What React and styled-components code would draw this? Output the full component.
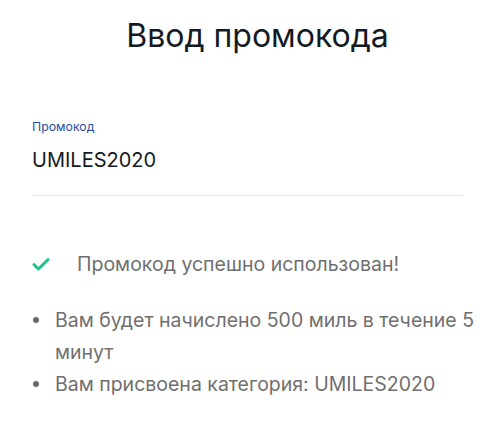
import styled, { createGlobalStyle } from 'styled-components'

const GlobalStyle = createGlobalStyle`
  html, body {
    margin: 0;
    padding: 0;
    background: #ffffff;
  }
  body {
    font-family: Inter, "Noto Sans", sans-serif;
  }
`;

const Modal = styled.div`
  width: 494px;
  height: 427px;
  box-sizing: border-box;
  padding: 16px 31px 0 32px;
  background: #fff;
  overflow: hidden;
`;

const Title = styled.h1`
  margin: 0;
  padding-left: 20px;
  text-align: center;
  font-size: 32px;
  font-weight: 400;
  line-height: 40px;
  color: #141a23;
`;

const Field = styled.div`
  margin-top: 63px;
  padding-bottom: 23px;
  border-bottom: 1px solid #dfe3ea;
`;

const Label = styled.div`
  font-size: 12.3px;
  line-height: 16px;
  color: #2a4ea3;
`;

const Value = styled.div`
  margin-top: 13px;
  font-size: 20px;
  line-height: 24px;
  color: #141a23;
`;

const Success = styled.div`
  display: flex;
  align-items: center;
  gap: 27px;
  margin-top: 56px;
  font-size: 19.5px;
  line-height: 24px;
  color: #6f6f6f;
`;

const List = styled.ul`
  margin: 28px -20px 0 0;
  padding: 0;
  list-style: none;
  font-size: 19.5px;
  line-height: 32px;
  color: #6f6f6f;
`;

const Item = styled.li`
  position: relative;
  padding-left: 23px;

  &::before {
    content: '';
    position: absolute;
    left: 1px;
    top: 13px;
    width: 6px;
    height: 6px;
    border-radius: 50%;
    background: #6a6a6a;
  }
`;

function CheckIcon() {
  return (
    <svg width="18" height="14" viewBox="0 0 18 14" fill="none">
      <path d="M2 7.5l4.5 4.5L16 2.5" stroke="#1ec48c" strokeWidth="3" strokeLinecap="round" strokeLinejoin="round" />
    </svg>
  );
}

export default function App() {
  return (
    <>
      <GlobalStyle />
      <Modal>
        <Title>Ввод промокода</Title>
        <Field>
          <Label>Промокод</Label>
          <Value>UMILES2020</Value>
        </Field>
        <Success>
          <CheckIcon />
          <span>Промокод успешно использован!</span>
        </Success>
        <List>
          <Item>Вам будет начислено 500 миль в течение 5 минут</Item>
          <Item>Вам присвоена категория: UMILES2020</Item>
        </List>
      </Modal>
    </>
  );
}
